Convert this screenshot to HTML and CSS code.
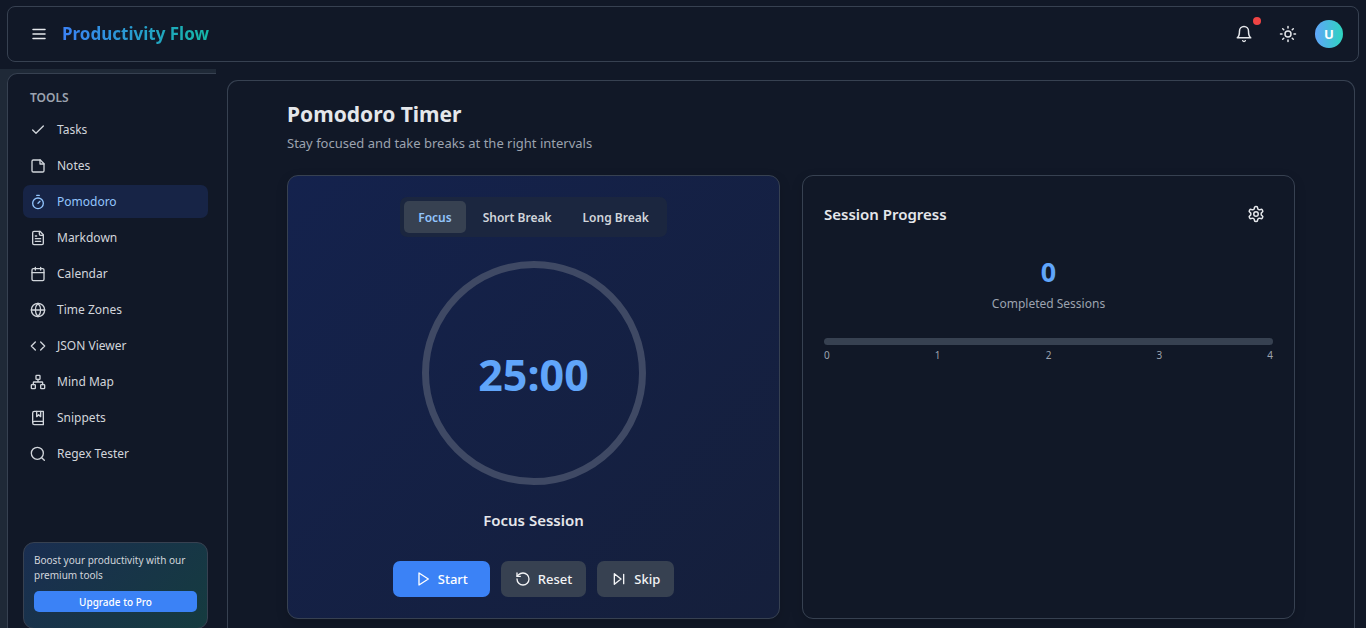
FILE: index.html
```html
<!DOCTYPE html>
<html lang="en">
<head>
<meta charset="utf-8">
<meta name="viewport" content="width=device-width, initial-scale=1">
<title>Productivity Flow</title>
<link rel="stylesheet" href="styles.css">
</head>
<body>
<header class="topbar">
  <div class="brand-group">
    <button class="icon-button" type="button" aria-label="Toggle menu"><svg class="icon" viewBox="0 0 24 24"><path d="M4 12h16M4 6h16M4 18h16"/></svg></button>
    <span class="brand">Productivity Flow</span>
  </div>
  <div class="actions">
    <button class="icon-button bell" type="button" aria-label="Notifications"><svg class="icon" viewBox="0 0 24 24"><path d="M6 8a6 6 0 0 1 12 0c0 7 3 9 3 9H3s3-2 3-9"/><path d="M10.3 21a1.94 1.94 0 0 0 3.4 0"/></svg><span class="badge"></span></button>
    <button class="icon-button" type="button" aria-label="Toggle theme"><svg class="icon" viewBox="0 0 24 24"><circle cx="12" cy="12" r="4"/><path d="M12 2v2M12 20v2M4.93 4.93l1.41 1.41M17.66 17.66l1.41 1.41M2 12h2M20 12h2M6.34 17.66l-1.41 1.41M19.07 4.93l-1.41 1.41"/></svg></button>
    <button class="avatar" type="button" aria-label="Account">U</button>
  </div>
</header>
<div class="shell">
  <aside class="sidebar">
    <div class="sidebar-panel">
      <h2 class="sidebar-title">TOOLS</h2>
      <nav class="nav">
        <a class="nav-link" href="#tasks"><svg class="icon" viewBox="0 0 24 24"><path d="M20 6 9 17l-5-5"/></svg>Tasks</a>
        <a class="nav-link" href="#notes"><svg class="icon" viewBox="0 0 24 24"><path d="M15.5 3H5a2 2 0 0 0-2 2v14c0 1.1.9 2 2 2h14a2 2 0 0 0 2-2V8.5L15.5 3Z"/><path d="M15 3v6h6"/></svg>Notes</a>
        <a class="nav-link nav-link-active" href="#pomodoro" aria-current="page"><svg class="icon" viewBox="0 0 24 24"><path d="M10 2h4M12 14l3-3"/><circle cx="12" cy="14" r="8"/></svg>Pomodoro</a>
        <a class="nav-link" href="#markdown"><svg class="icon" viewBox="0 0 24 24"><path d="M15 2H6a2 2 0 0 0-2 2v16a2 2 0 0 0 2 2h12a2 2 0 0 0 2-2V7Z"/><path d="M14 2v4a2 2 0 0 0 2 2h4M10 9H8M16 13H8M16 17H8"/></svg>Markdown</a>
        <a class="nav-link" href="#calendar"><svg class="icon" viewBox="0 0 24 24"><path d="M8 2v4M16 2v4M3 10h18"/><rect x="3" y="4" width="18" height="18" rx="2"/></svg>Calendar</a>
        <a class="nav-link" href="#zones"><svg class="icon" viewBox="0 0 24 24"><circle cx="12" cy="12" r="10"/><path d="M12 2a14.5 14.5 0 0 0 0 20 14.5 14.5 0 0 0 0-20M2 12h20"/></svg>Time Zones</a>
        <a class="nav-link" href="#json"><svg class="icon" viewBox="0 0 24 24"><path d="m16 18 6-6-6-6M8 6l-6 6 6 6"/></svg>JSON Viewer</a>
        <a class="nav-link" href="#mindmap"><svg class="icon" viewBox="0 0 24 24"><rect x="16" y="16" width="6" height="6" rx="1"/><rect x="2" y="16" width="6" height="6" rx="1"/><rect x="9" y="2" width="6" height="6" rx="1"/><path d="M5 16v-3a1 1 0 0 1 1-1h12a1 1 0 0 1 1 1v3M12 12V8"/></svg>Mind Map</a>
        <a class="nav-link" href="#snippets"><svg class="icon" viewBox="0 0 24 24"><path d="M4 19.5v-15A2.5 2.5 0 0 1 6.500 2H20v20H6.500a2.500 2.500 0 0 1 0-5H20"/><path d="M10 2v8l3-3 3 3V2"/></svg>Snippets</a>
        <a class="nav-link" href="#regex"><svg class="icon" viewBox="0 0 24 24"><circle cx="11" cy="11" r="9"/><path d="m21.500 21.500-4-4"/></svg>Regex Tester</a>
      </nav>
      <section class="promo">
        <p class="promo-text">Boost your productivity with our premium tools</p>
        <button class="promo-button" type="button">Upgrade to Pro</button>
      </section>
    </div>
  </aside>
  <main class="main">
    <div class="content">
      <h1 class="page-title">Pomodoro Timer</h1>
      <p class="page-subtitle">Stay focused and take breaks at the right intervals</p>
      <div class="cards">
        <section class="card timer-card">
          <div class="tabs" role="tablist">
            <button class="tab tab-active" type="button" role="tab" aria-selected="true">Focus</button>
            <button class="tab" type="button" role="tab" aria-selected="false">Short Break</button>
            <button class="tab" type="button" role="tab" aria-selected="false">Long Break</button>
          </div>
          <div class="dial"><span class="time">25:00</span></div>
          <h2 class="session-name">Focus Session</h2>
          <div class="controls">
            <button class="control control-primary" type="button"><svg class="icon" viewBox="0 0 24 24"><path d="M6 3l14 9-14 9z"/></svg>Start</button>
            <button class="control" type="button"><svg class="icon" viewBox="0 0 24 24"><path d="M3 12a9 9 0 1 0 9-9 9.750 9.750 0 0 0-6.740 2.740L3 8"/><path d="M3 3v5h5"/></svg>Reset</button>
            <button class="control" type="button"><svg class="icon" viewBox="0 0 24 24"><path d="M5 4l10 8-10 8zM19 5v14"/></svg>Skip</button>
          </div>
        </section>
        <section class="card progress-card">
          <div class="card-head">
            <h2 class="card-title">Session Progress</h2>
            <button class="icon-button settings" type="button" aria-label="Timer settings"><svg class="icon" viewBox="0 0 24 24"><path d="M12.220 2h-.44a2 2 0 0 0-2 2v.18a2 2 0 0 1-1 1.730l-.43.25a2 2 0 0 1-2 0l-.15-.08a2 2 0 0 0-2.730.73l-.22.38a2 2 0 0 0 .73 2.730l.15.1a2 2 0 0 1 1 1.720v.51a2 2 0 0 1-1 1.740l-.15.09a2 2 0 0 0-.73 2.730l.22.38a2 2 0 0 0 2.730.73l.15-.08a2 2 0 0 1 2 0l.43.25a2 2 0 0 1 1 1.730V20a2 2 0 0 0 2 2h.44a2 2 0 0 0 2-2v-.18a2 2 0 0 1 1-1.730l.43-.25a2 2 0 0 1 2 0l.15.08a2 2 0 0 0 2.730-.73l.22-.39a2 2 0 0 0-.73-2.730l-.15-.08a2 2 0 0 1-1-1.740v-.5a2 2 0 0 1 1-1.740l.15-.09a2 2 0 0 0 .73-2.730l-.22-.38a2 2 0 0 0-2.730-.73l-.15.08a2 2 0 0 1-2 0l-.43-.25a2 2 0 0 1-1-1.730V4a2 2 0 0 0-2-2z"/><circle cx="12" cy="12" r="3"/></svg></button>
          </div>
          <div class="count">0</div>
          <p class="count-label">Completed Sessions</p>
          <div class="track" role="progressbar" aria-label="Completed sessions" aria-valuemin="0" aria-valuemax="4" aria-valuenow="0"></div>
          <div class="scale"><span>0</span><span>1</span><span>2</span><span>3</span><span>4</span></div>
        </section>
      </div>
    </div>
  </main>
</div>
</body>
</html>
```
FILE: styles.css
```css
* { box-sizing: border-box; }

body {
  margin: 0;
  height: 100vh;
  overflow: hidden;
  display: flex;
  flex-direction: column;
  background: #111827;
  color: #e5e7eb;
  font-family: "Segoe UI", "Noto Sans", sans-serif;
  font-size: 13px;
}

h1, h2, p { margin: 0; }

button {
  margin: 0;
  padding: 0;
  border: 0;
  background: none;
  color: inherit;
  font: inherit;
  cursor: pointer;
}

.icon {
  width: 16px;
  height: 16px;
  flex: none;
  fill: none;
  stroke: currentColor;
  stroke-width: 2;
  stroke-linecap: round;
  stroke-linejoin: round;
}

.topbar {
  flex: none;
  display: flex;
  align-items: center;
  justify-content: space-between;
  height: 56px;
  margin: 6px 7px 7px;
  padding: 0 15px 0 14px;
  border: 1px solid #374151;
  border-radius: 8px;
}

.brand-group { display: flex; align-items: center; gap: 6px; }

.icon-button {
  display: grid;
  place-items: center;
  width: 34px;
  height: 34px;
}

.icon-button .icon { width: 18px; height: 18px; }

.brand {
  font-size: 17px;
  line-height: 28px;
  font-weight: 700;
  background: linear-gradient(90deg, #3b82f6, #14b8a6);
  -webkit-background-clip: text;
  background-clip: text;
  color: transparent;
}

.actions { display: flex; align-items: center; gap: 10px; }

.bell { position: relative; }

.badge {
  position: absolute;
  top: 0;
  right: 0;
  width: 8px;
  height: 8px;
  border-radius: 50%;
  background: #ef4444;
}

.avatar {
  width: 28px;
  height: 28px;
  border-radius: 50%;
  background: linear-gradient(90deg, #60a5fa, #2dd4bf);
  color: #fff;
  font-weight: 700;
}

.shell { flex: 1; min-height: 0; display: flex; }

.sidebar {
  flex: none;
  width: 216px;
  padding: 4px 0 0 7px;
  background: #1f2937;
}

.sidebar-panel {
  display: flex;
  flex-direction: column;
  height: 100%;
  padding: 15px 8px 0 15px;
  border: 1px solid #374151;
  border-width: 1px 0 0 1px;
  border-radius: 10px 0 0 0;
  background: #111827;
}

.sidebar-title {
  padding-left: 7px;
  margin-bottom: 6px;
  color: #9ca3af;
  font-size: 12px;
  line-height: 18px;
  font-weight: 600;
}

.nav { display: flex; flex-direction: column; gap: 3px; }

.nav-link {
  display: flex;
  align-items: center;
  gap: 11px;
  height: 33px;
  padding: 0 7px;
  border-radius: 7px;
  color: #d1d5db;
  font-size: 12px;
  text-decoration: none;
}

.nav-link-active { background: #172446; color: #93c5fd; }

.promo {
  margin-top: auto;
  height: 87px;
  padding: 10px;
  margin-bottom: -1px;
  border: 1px solid #374151;
  border-radius: 11px;
  background: linear-gradient(135deg, #1a2e51, #153b3f);
}

.promo-text { font-size: 10px; line-height: 15px; color: #d1d5db; }

.promo-button {
  width: 100%;
  height: 21px;
  margin-top: 8px;
  border-radius: 5px;
  background: #3b82f6;
  color: #fff;
  font-size: 10px;
  line-height: 20px;
  font-weight: 500;
}

.main {
  flex: 1;
  min-width: 0;
  margin: 11px 11px 0;
  padding: 18px 22px 0;
  border: 1px solid #374151;
  border-bottom: 0;
  border-radius: 11px 11px 0 0;
}

.content { max-width: 1008px; margin: 0 auto; }

.page-title { font-size: 21px; line-height: 30px; font-weight: 700; }

.page-subtitle { margin-top: 4px; font-size: 13px; line-height: 20px; color: #9ca3af; }

.cards {
  display: grid;
  grid-template-columns: 1fr 1fr;
  gap: 22px;
  margin-top: 22px;
}

.card {
  height: 444px;
  padding: 21px;
  border: 1px solid #374151;
  border-radius: 11px;
  box-shadow: 0 4px 12px rgba(0, 0, 0, 0.15);
}

.timer-card {
  display: flex;
  flex-direction: column;
  align-items: center;
  background: linear-gradient(135deg, #14224d, #151f3b);
}

.tabs {
  display: flex;
  gap: 3px;
  padding: 4px;
  border-radius: 7px;
  background: #1b263f;
}

.tab {
  height: 32px;
  padding: 0 14px;
  border-radius: 5px;
  color: #d1d5db;
  font-size: 12px;
  font-weight: 600;
}

.tab-active { background: #374151; color: #93c5fd; }

.dial {
  display: grid;
  place-items: center;
  width: 224px;
  height: 224px;
  margin-top: 24px;
  padding-top: 4px;
  border: 7px solid #3f4964;
  border-radius: 50%;
}

.time { font-size: 43px; line-height: 48px; font-weight: 700; color: #60a5fa; }

.session-name { margin-top: 23px; font-size: 15px; line-height: 24px; font-weight: 600; }

.controls { display: flex; gap: 11px; margin-top: 29px; }

.control {
  display: flex;
  align-items: center;
  gap: 7px;
  height: 36px;
  padding: 0 14px;
  border-radius: 7px;
  background: #374151;
  color: #f3f4f6;
  font-size: 13px;
  font-weight: 500;
}

.control-primary { padding: 0 22px; background: #3b82f6; color: #fff; }

.card-head {
  display: flex;
  align-items: center;
  justify-content: space-between;
}

.card-title { font-size: 15px; line-height: 24px; font-weight: 600; }

.count {
  margin-top: 24px;
  text-align: center;
  color: #60a5fa;
  font-size: 27px;
  line-height: 34px;
  font-weight: 700;
}

.count-label { margin-top: 6px; text-align: center; color: #9ca3af; font-size: 12px; line-height: 18px; }

.track { height: 7px; margin-top: 25px; border-radius: 4px; background: #374151; }

.scale {
  display: flex;
  justify-content: space-between;
  margin-top: 3px;
  color: #9ca3af;
  font-size: 10px;
  line-height: 14px;
}
```
